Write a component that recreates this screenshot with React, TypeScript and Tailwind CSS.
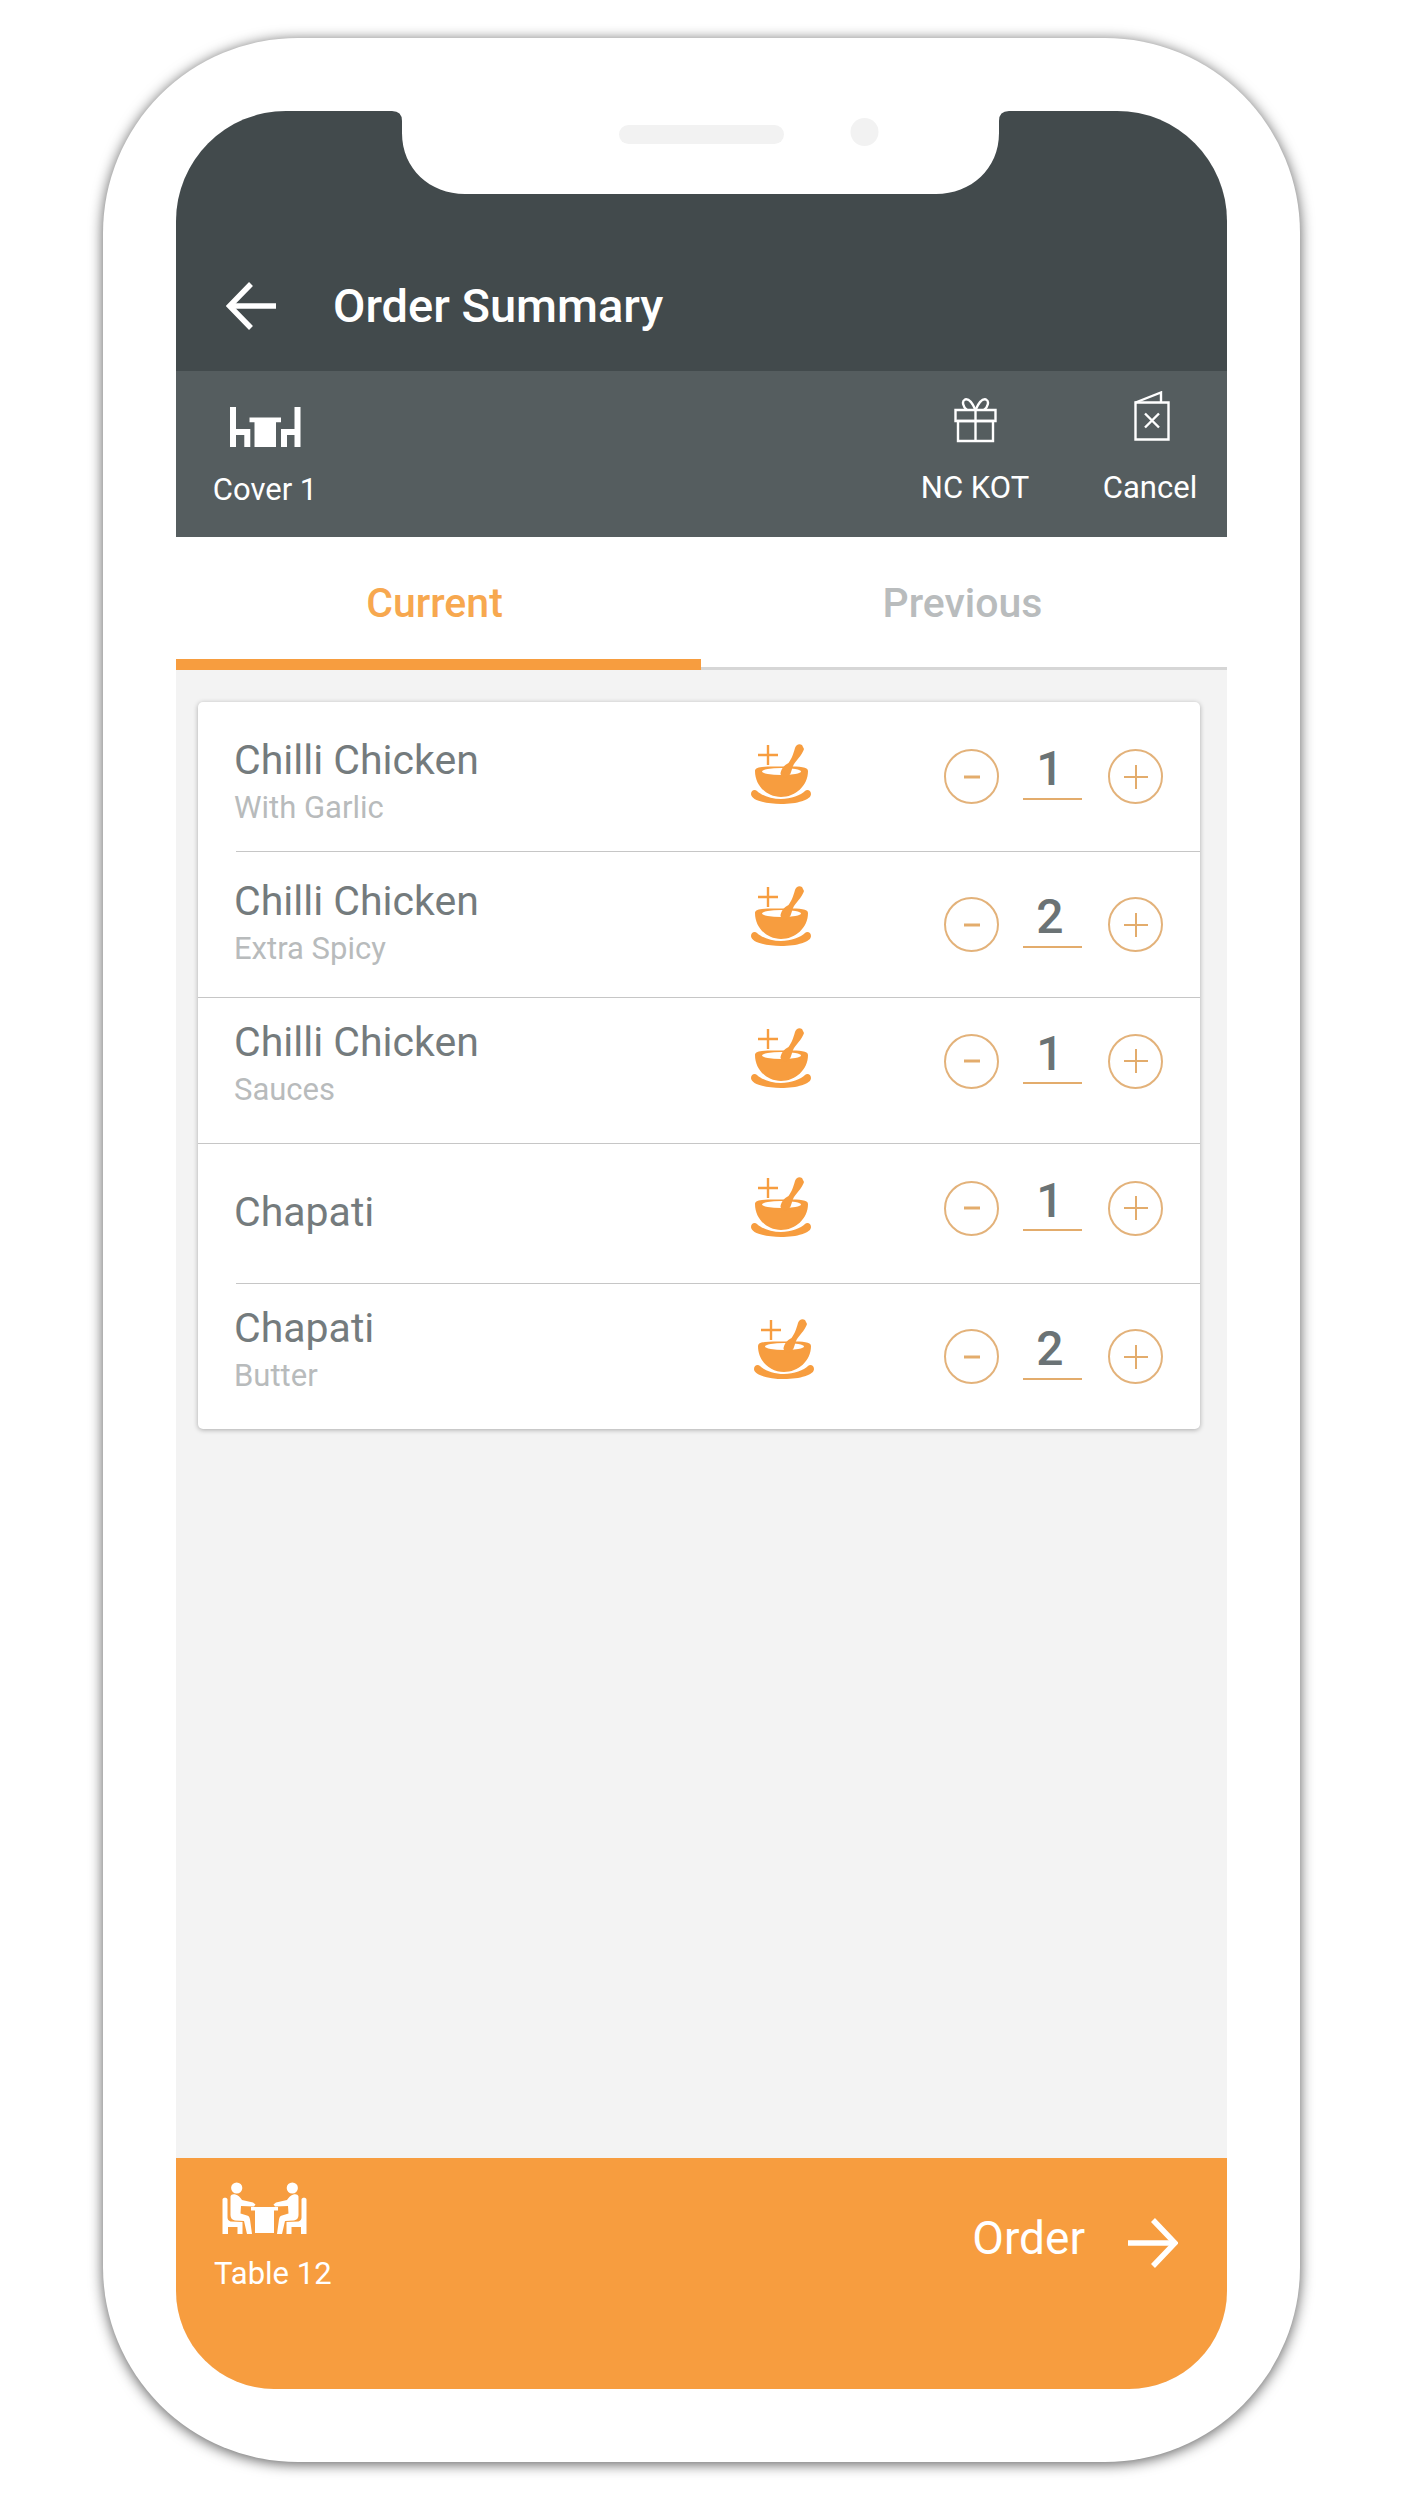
const ORANGE = "#f79d3f";

const rows = [
  { name: "Chilli Chicken", sub: "With Garlic", qty: 1, rowH: "h-[149px]", text: "pt-[15px]", icon: "pb-[6px]", stepper: "", inset: true },
  { name: "Chilli Chicken", sub: "Extra Spicy", qty: 2, rowH: "h-[145px]", text: "", icon: "pb-[17px]", stepper: "", inset: false },
  { name: "Chilli Chicken", sub: "Sauces", qty: 1, rowH: "h-[145px]", text: "pb-[10px]", icon: "pb-[25px]", stepper: "pb-[19px]", inset: false },
  { name: "Chapati", sub: "", qty: 1, rowH: "h-[139px]", text: "pb-[3px]", icon: "pb-[14px]", stepper: "pb-[11px]", inset: true },
  { name: "Chapati", sub: "Butter", qty: 2, rowH: "h-[145px]", text: "pb-[9px]", icon: "pb-[16px] pl-[3px]", stepper: "", inset: false },
];

function NotchOverlay() {
  return (
    <svg className="absolute left-0 top-0" width="1051" height="90" viewBox="0 0 1051 90">
      <path
        d="M216 0 Q226 0 226 10 L226 22 C226 58 254 83 289 83 L760 83 C795 83 823 58 823 22 L823 10 Q823 0 833 0 Z"
        fill="#ffffff"
      />
      <rect x="443" y="14" width="165" height="19" rx="9.5" fill="#f2f2f2" />
      <circle cx="688.5" cy="21" r="14" fill="#f2f2f2" />
    </svg>
  );
}

function BackArrow() {
  return (
    <svg width="50" height="48" viewBox="0 0 50 48" fill="none" stroke="#ffffff" strokeWidth="5.500">
      <path d="M50 24H4" />
      <path d="M25 2 3.5 24 25 46" />
    </svg>
  );
}

function NextArrow() {
  return (
    <svg width="50" height="50" viewBox="0 0 50 50" fill="none" stroke="#ffffff" strokeWidth="5.500">
      <path d="M0 25H46" />
      <path d="M25 2 47 25 25 48" />
    </svg>
  );
}

function TableIcon() {
  return (
    <svg width="72" height="42" viewBox="0 0 72 42" fill="#ffffff">
      <path d="M1 1h6v22h14.300v18h-6V29H7v12H1z" />
      <path d="M71.500 1h-6v22H52v18h6V29h7.500v12h6z" />
      <path d="M20.500 11.500H52v4.800h-5V41H25.500V16.300h-5z" />
    </svg>
  );
}

function GiftIcon() {
  return (
    <svg width="43" height="46" viewBox="0 0 43 46" fill="none" stroke="#ffffff" strokeWidth="2.400">
      <path d="M1.500 13h40v11h-40z" />
      <path d="M4 24h35v20H4z" />
      <path d="M21.500 13v31" />
      <path d="M21.500 13C18 5 14 1.500 11 2.500 7.500 4 9 10 13 13" />
      <path d="M21.500 13C25 5 29 1.500 32 2.500 35.500 4 34 10 30 13" />
    </svg>
  );
}

function CancelBillIcon() {
  return (
    <svg width="36" height="50" viewBox="0 0 36 50" fill="none" stroke="#ffffff" strokeWidth="2.400">
      <path d="M1.500 11.500h33v37h-33z" />
      <path d="M1.500 11.500 27 1.500v10" />
      <path d="m11 22.500 14 14M25 22.500l-14 14" />
    </svg>
  );
}

function Person() {
  return (
    <g>
      <circle cx="14.700" cy="6" r="5.600" />
      <path d="M8.500 14.500C9 12.500 11 12 13.500 12.500 16 13 18.500 15.500 20 18L31 20.500 33.500 22.500 32 24.500 19 24 18.500 31.500 25 33.500C27 34 27.500 35 28 37.500L30 52H25L22 39 13 38.500C10 38 8.500 36 8.500 33Z" />
      <path d="M0.500 17.500C0.500 15 5.500 15 5.500 17.500V35.500C5.500 37.500 6.500 38.500 8.500 39.500L20.500 40V52H15.500V45H6V52H0.500Z" />
    </g>
  );
}

function PeopleIcon() {
  return (
    <svg width="85" height="53" viewBox="0 0 85 53" fill="#ffffff">
      <Person />
      <g transform="translate(85 0) scale(-1 1)">
        <Person />
      </g>
      <path d="M29 25h27v3.500h-4V51H33V28.500h-4z" />
    </svg>
  );
}

function BowlIcon() {
  return (
    <svg width="60" height="60" viewBox="0 0 60 60" fill={ORANGE}>
      {/* saucer */}
      <path d="M0 50C0 46 4 45 6 47 10 51 20 55 30 55 40 55 50 51 54 47 56 45 60 46 60 50 60 56 46 60 30 60 14 60 0 56 0 50Z" />
      {/* bowl */}
      <path d="M4 27C4 22 16 22.500 30.500 22.500 45 22.500 57 22 57 27 57 42 44 53 30 53 16 53 4 42 4 27Z" />
      <ellipse cx="30.500" cy="27.500" rx="19.500" ry="3.500" fill="#ffffff" />
      {/* spoon */}
      <path d="M51 1C48 -1 45 1 44 4 42 11 41 14 37.500 19 33 21 29.500 26 29.500 30 31.500 35 37.500 34 39.500 29.500 41 25.500 41.500 22.500 43 20 47 15 52 9 53 5Z" />
      <path d="M17 1v20M7 11h20" stroke={ORANGE} strokeWidth="2.400" fill="none" />
    </svg>
  );
}

function RoundButton({ kind }: { kind: "minus" | "plus" }) {
  return (
    <div className="flex h-[55px] w-[55px] items-center justify-center rounded-full border-2 border-[#e3b27a]">
      <svg width="26" height="26" viewBox="0 0 26 26" stroke="#e3ac6c" fill="none">
        {kind === "minus" ? (
          <path d="M5 13h16" strokeWidth="3" />
        ) : (
          <path d="M1 13h24M13 1v24" strokeWidth="2" />
        )}
      </svg>
    </div>
  );
}

function OrderRow({ row }: { row: (typeof rows)[number] }) {
  return (
    <div className={`flex items-center pl-[36px] pr-[37px] ${row.rowH}`}>
      <div className={`min-w-0 flex-1 ${row.text}`}>
        <div className="text-[41px] leading-[48px] text-[#747b7d]">{row.name}</div>
        {row.sub && <div className="text-[31px] leading-[48px] text-[#b8bbbc]">{row.sub}</div>}
      </div>
      <div className={`mr-[127px] w-[66px] ${row.icon}`}>
        <BowlIcon />
      </div>
      <div className={`flex items-center ${row.stepper}`}>
        <RoundButton kind="minus" />
        <div className="ml-[24px] mr-[26px] flex h-[46px] w-[59px] items-center justify-center border-b-2 border-[#e3ac6c] pb-[13px] pr-[5px] text-[48px] font-medium leading-none text-[#6b7375]">
          {row.qty}
        </div>
        <RoundButton kind="plus" />
      </div>
    </div>
  );
}

export default function App() {
  return (
    <div className="h-[2501px] w-[1401px] overflow-hidden bg-white pl-[103px] pt-[38px] [font-family:Roboto,sans-serif]">
      <div className="h-[2424px] w-[1197px] rounded-[195px] bg-white p-[73px] shadow-[0_2px_14px_rgba(0,0,0,0.65)]">
        <div className="relative flex h-[2278px] w-[1051px] flex-col overflow-hidden rounded-t-[110px] rounded-b-[98px] bg-[#f3f3f3]">
          <NotchOverlay />

          <div className="flex h-[260px] items-end bg-[#424a4c] pb-[41px] pl-[50px]">
            <BackArrow />
            <h1 className="ml-[57px] text-[47px] font-medium leading-[48px] text-white">Order Summary</h1>
          </div>

          <div className="flex h-[166px] bg-[#555d5f] text-[31px] leading-[36px] text-white">
            <div className="ml-[38px] flex w-[102px] flex-col items-center pt-[35px]">
              <TableIcon />
              <span className="mt-[24px] whitespace-nowrap">Cover 1</span>
            </div>
            <div className="ml-auto flex w-[110px] flex-col items-center pt-[26px]">
              <GiftIcon />
              <span className="mt-[27px] whitespace-nowrap">NC KOT</span>
            </div>
            <div className="ml-[73px] mr-[30px] flex w-[94px] flex-col items-center pt-[20px]">
              <div className="pl-[3px]">
                <CancelBillIcon />
              </div>
              <span className="mt-[29px] whitespace-nowrap">Cancel</span>
            </div>
          </div>

          <div className="flex h-[133px] bg-white text-[41px] font-medium leading-[48px]">
            <div className="w-[525px] border-b-[11px] border-[#f79d3f] pr-[8px] pt-[42px] text-center text-[#f7a84f]">Current</div>
            <div className="flex-1 border-b-[3px] border-[#d6d6d6] pr-[3px] pt-[42px] text-center text-[#b9bcbd]">Previous</div>
          </div>

          <div className="flex-1 pl-[22px] pr-[27px] pt-[32px]">
            <div className="rounded-[5px] bg-white shadow-[0_1px_5px_rgba(0,0,0,0.3)]">
              {rows.map((row, i) => (
                <div key={i}>
                  <OrderRow row={row} />
                  {i < rows.length - 1 && (
                    <div className={`h-px bg-[#c6c6c6] ${row.inset ? "ml-[38px]" : ""}`} />
                  )}
                </div>
              ))}
            </div>
          </div>

          <div className="flex h-[231px] justify-between bg-[#f79d3f] text-white">
            <div className="ml-[38px] flex flex-col items-start pt-[24px]">
              <div className="ml-[8px]">
                <PeopleIcon />
              </div>
              <span className="mt-[21px] whitespace-nowrap text-[31px] leading-[36px]">Table 12</span>
            </div>
            <div className="mr-[49px] flex items-start pt-[60px]">
              <span className="text-[46px] leading-[40px]">Order</span>
              <div className="ml-[43px]">
                <NextArrow />
              </div>
            </div>
          </div>
        </div>
      </div>
    </div>
  );
}
